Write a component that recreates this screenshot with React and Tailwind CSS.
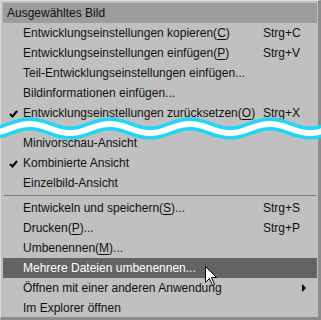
import React from 'react'

const font = { fontFamily: '"Liberation Sans", Arial, sans-serif' }

function U({ children }) {
  return <span className="underline underline-offset-2">{children}</span>
}

function Check() {
  return (
    <svg width="9" height="8" viewBox="0 0 9 8" className="absolute left-[6px] top-[7px]">
      <path d="M1 4 L3.5 6.5 L8 1" fill="none" stroke="#000" strokeWidth="2" />
    </svg>
  )
}

function Row({ label, shortcut, checked, sub, active }) {
  return (
    <div
      className={`relative flex h-5 items-center pl-[20px] text-[12px] ${
        active ? 'bg-[#646464] text-white' : 'text-[#101010]'
      }`}
    >
      {checked && <Check />}
      <span className="flex-1 whitespace-nowrap">{label}</span>
      {shortcut && <span className="w-[54px] whitespace-nowrap">{shortcut}</span>}
      {sub && (
        <svg width="5" height="8" viewBox="0 0 5 8" className="absolute right-[10px] top-[6px]">
          <path d="M0 0 L4 4 L0 8 Z" fill="#000" />
        </svg>
      )}
    </div>
  )
}

function Wave() {
  let d = 'M-20 128'
  for (let x = -20; x <= 340; x += 2) {
    const y = 128.5 - 4.5 * Math.cos(((x - 30) / 80) * 2 * Math.PI)
    d += ` L${x} ${y.toFixed(2)}`
  }
  return (
    <svg width="321" height="40" viewBox="0 107 321 40" className="absolute left-0 top-[107px]">
      <path d={d} fill="none" stroke="#1fd6f6" strokeWidth="13" />
      <path d={d} fill="none" stroke="#ffffff" strokeWidth="6" />
    </svg>
  )
}

function Cursor() {
  return (
    <svg width="13" height="21" viewBox="0 0 13 21" className="absolute left-[205px] top-[266px]">
      <path
        d="M0.5 0.5 L0.5 16.5 L4.5 12.5 L7.5 19.5 L9.5 18.5 L6.5 11.5 L11.5 11.5 Z"
        fill="#fff"
        stroke="#000"
        strokeWidth="1"
      />
    </svg>
  )
}

export default function App() {
  return (
    <div style={font} className="relative h-[320px] w-[321px] overflow-hidden bg-[#c0c0c0]">
      <div className="h-full w-full border-l border-t border-[#dcdcdc] border-r-[3px] border-b-[3px] border-r-[#8c8c8c] border-b-[#8c8c8c] pl-[2px] pr-[1px] pt-[2px]">
        <div className="flex h-5 items-center bg-[#9c9c9c] pl-[4px] text-[12px] text-[#101010]">
          Ausgewähltes Bild
        </div>
        <Row label={<>Entwicklungseinstellungen kopieren(<U>C</U>)</>} shortcut="Strg+C" />
        <Row label={<>Entwicklungseinstellungen einfügen(<U>P</U>)</>} shortcut="Strg+V" />
        <Row label="Teil-Entwicklungseinstellungen einfügen..." />
        <Row label="Bildinformationen einfügen..." />
        <Row label={<>Entwicklungseinstellungen zurücksetzen(<U>O</U>)</>} shortcut="Strg+X" checked />
        <div className="h-[10px]" />
        <Row label="Minivorschau-Ansicht" />
        <Row label="Kombinierte Ansicht" checked />
        <Row label="Einzelbild-Ansicht" />
        <div className="flex h-[5px] items-center px-[1px]">
          <div className="h-px w-full bg-[#7c7c7c]" />
        </div>
        <Row label={<>Entwickeln und speichern(<U>S</U>)...</>} shortcut="Strg+S" />
        <Row label={<>Drucken(<U>P</U>)...</>} shortcut="Strg+P" />
        <Row label={<>Umbenennen(<U>M</U>)...</>} />
        <Row label="Mehrere Dateien umbenennen..." active />
        <Row label="Öffnen mit einer anderen Anwendung" sub />
        <Row label="Im Explorer öffnen" />
      </div>
      <Wave />
      <Cursor />
    </div>
  )
}
